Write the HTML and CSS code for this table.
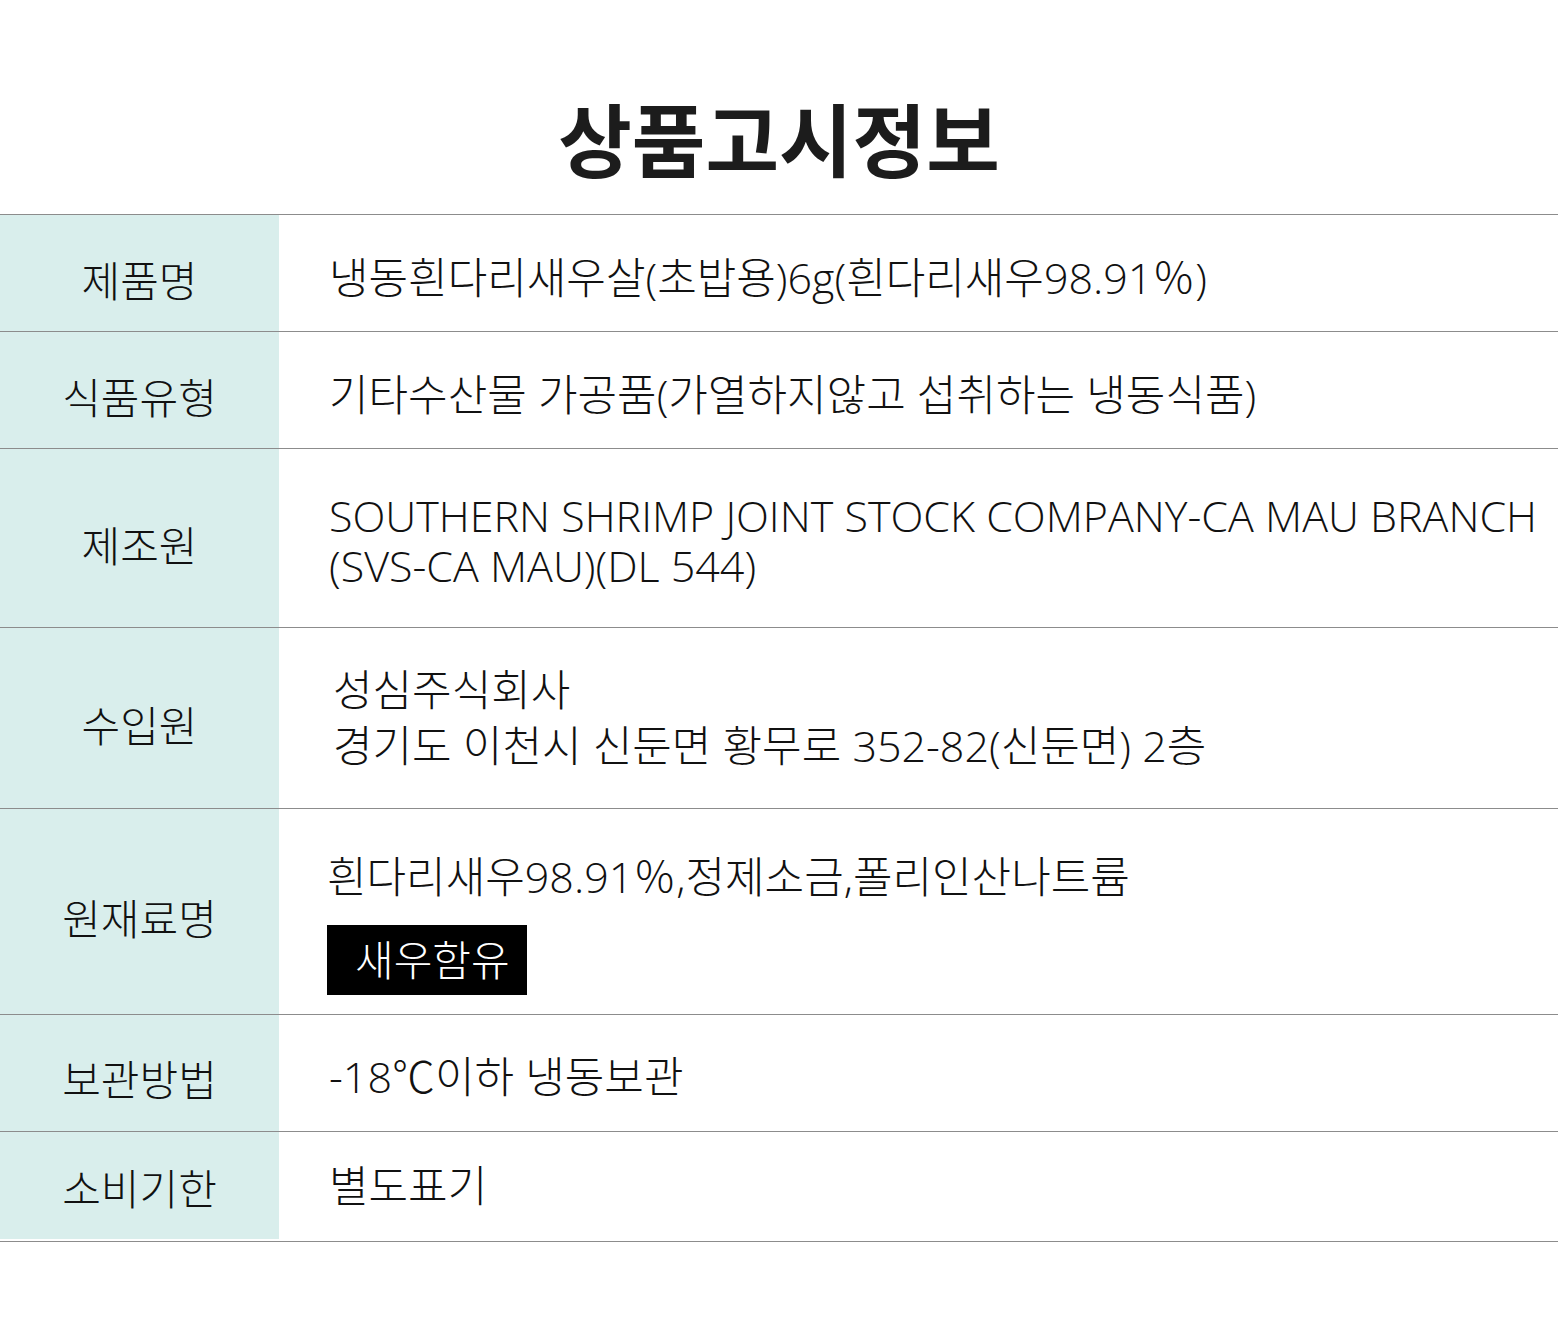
FILE: index.html
```html
<!DOCTYPE html>
<html lang="ko">
<head>
<meta charset="utf-8">
<title>상품고시정보</title>
<link rel="stylesheet" href="styles.css">
</head>
<body>
<div class="page">
  <h1 class="title">상품고시정보</h1>
  <div class="table">
    <div class="row r1">
      <div class="label">제품명</div>
      <div class="value">냉동흰다리새우살(초밥용)6g(흰다리새우98.91％)</div>
    </div>
    <div class="row r2">
      <div class="label">식품유형</div>
      <div class="value">기타수산물 가공품(가열하지않고 섭취하는 냉동식품)</div>
    </div>
    <div class="row r3">
      <div class="label">제조원</div>
      <div class="value lat">SOUTHERN SHRIMP JOINT STOCK COMPANY-CA MAU BRANCH<br>(SVS-CA MAU)(DL 544)</div>
    </div>
    <div class="row r4">
      <div class="label">수입원</div>
      <div class="value addr">성심주식회사<br>경기도 이천시 신둔면 황무로 352-82(신둔면) 2층</div>
    </div>
    <div class="row r5">
      <div class="label">원재료명</div>
      <div class="value stack">
        <div>흰다리새우98.91％,정제소금,폴리인산나트륨</div>
        <div class="badge">새우함유</div>
      </div>
    </div>
    <div class="row r6">
      <div class="label">보관방법</div>
      <div class="value">-18℃이하 냉동보관</div>
    </div>
    <div class="row r7">
      <div class="label">소비기한</div>
      <div class="value">별도표기</div>
    </div>
  </div>
</div>
</body>
</html>
```

FILE: styles.css
```css
html, body {
  margin: 0;
  padding: 0;
  background: #ffffff;
}
body {
  font-family: "Open Sans", "Noto Sans CJK KR", sans-serif;
  color: #111111;
}
.page {
  width: 1558px;
}
.title {
  margin: 0;
  height: 214px;
  display: flex;
  align-items: center;
  justify-content: center;
  padding-top: 58px;
  box-sizing: border-box;
  font-family: "Noto Sans CJK KR", sans-serif;
  font-size: 80px;
  font-weight: 700;
  color: #1c1c1c;
  letter-spacing: 0;
}
.table {
  border-top: 1px solid #8c8c8c;
}
.row {
  display: flex;
  border-bottom: 1px solid #8c8c8c;
  box-sizing: border-box;
}
.label {
  width: 279px;
  flex: 0 0 279px;
  background: #d9eeec;
  display: flex;
  align-items: center;
  justify-content: center;
  font-size: 42px;
  font-weight: 300;
  padding-top: 10px;
  box-sizing: border-box;
}
.value {
  flex: 1;
  display: flex;
  align-items: center;
  padding-left: 50px;
  padding-top: 10px;
  box-sizing: border-box;
  font-size: 43px;
  font-weight: 300;
  line-height: 52px;
}
.lat {
  font-size: 43px;
  line-height: 50px;
  padding-left: 50px;
  padding-top: 6px;
}
.r1 { height: 117px; }
.r2 { height: 117px; }
.r3 { height: 179px; }
.r4 { height: 181px; }
.r5 { height: 206px; }
.r6 { height: 117px; }
.r6 .label, .r6 .value { padding-top: 8px; }
.r7 { height: 110px; padding-bottom: 3px; }
.r7 .label { height: 107px; }
.r7 .label, .r7 .value { padding-top: 2px; }
.addr {
  padding-left: 54px;
  padding-top: 0;
  line-height: 56px;
}
.stack {
  flex-direction: column;
  align-items: flex-start;
  justify-content: center;
  padding-left: 48px;
  padding-top: 22px;
  gap: 0;
}
.badge {
  margin-top: 22px;
  width: 200px;
  height: 70px;
  background: #000000;
  color: #ffffff;
  box-sizing: border-box;
  padding-left: 28px;
  display: flex;
  align-items: center;
  font-size: 42px;
  line-height: 70px;
}
```
